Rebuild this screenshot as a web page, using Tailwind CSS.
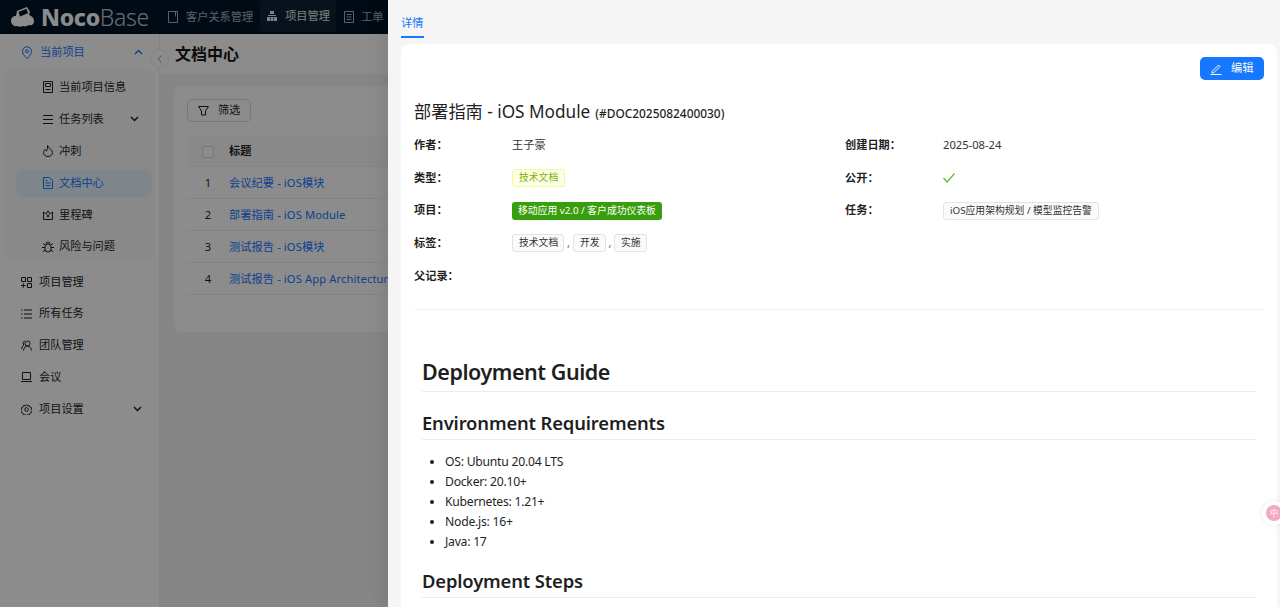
<!DOCTYPE html>
<html lang="zh">
<head>
<meta charset="utf-8">
<script src="https://cdn.jsdelivr.net/npm/@tailwindcss/browser@4"></script>
<title>NocoBase</title>
</head>
<body class="overflow-hidden">
<div class="relative w-[1280px] h-[607px] overflow-hidden bg-[#f5f5f5] text-[11.2px] text-[#1f1f1f] [font-family:'Noto_Sans','Noto_Sans_CJK_SC',sans-serif]">
  <!-- base page -->
  <div class="flex flex-col h-full">
    <header class="h-[34px] bg-[#001529] flex items-center text-white/65 shrink-0">
      <div class="w-[160px] flex items-center pl-[11px] gap-[7px] shrink-0">
        <svg class="w-[23px] h-[20px]" viewBox="0 0 23 20"><path d="M0 14c0-3 2-5 5-5l1-5 10-4 3 5-1 3c3 1 5 3 5 6 0 3-2 5-5 4-2 1-4 2-6 1-2 1-4 1-6 0-3 1-6-2-6-5z" fill="#fff"/><path d="M7.500 5l8-3.200 1.500 4.500-8 3.200z" fill="#001529"/></svg>
        <span class="text-[23px] leading-none text-white tracking-[-.3px] whitespace-nowrap"><b class="font-extrabold">Noco</b><span class="font-light opacity-75">Base</span></span>
      </div>
      <nav class="flex items-center h-full">
        <div class="flex items-center h-full pl-[8px] pr-[7px] gap-[8px]">
          <svg class="w-[10px] h-[12px]" viewBox="0 0 10 12" fill="none" stroke="currentColor"><path d="M.5.5h9v11h-9zM7.500 .5v5"/></svg>
          <span>客户关系管理</span>
        </div>
        <div class="flex items-center h-[32px] self-start w-[76px] pl-[7px] gap-[8px] rounded-[4px] bg-white/5 text-white/90">
          <svg class="w-[10px] h-[10px]" viewBox="0 0 10 10" fill="currentColor"><path d="M3 0h4v3H3zM0 6h3v4H0zM3.500 6h3v4h-3zM7 6h3v4H7zM1 4h8v1H1z"/></svg>
          <span>项目管理</span>
        </div>
        <div class="flex items-center h-full pl-[8px] gap-[7px]">
          <svg class="w-[10px] h-[12px]" viewBox="0 0 10 12" fill="none" stroke="currentColor"><path d="M.5.5h9v11h-9zM2.500 3.500h5M2.500 6h5M2.500 8.500h5"/></svg>
          <span>工单</span>
        </div>
      </nav>
    </header>
    <div class="flex flex-1 min-h-0">
      <aside class="relative w-[160px] shrink-0 bg-white border-r border-[#f0f0f0] pt-[2px] text-[#1f1f1f]">
        <div class="h-[32px] flex items-center pl-[21px] pr-[16px] gap-[7px] text-[#1677ff]">
          <svg class="w-[12px] h-[13px]" viewBox="0 0 12 13" fill="none" stroke="currentColor"><path d="M6 12.500C3.500 10 1.500 8 1.500 5.300a4.500 4.500 0 0 1 9 0C10.500 8 8.500 10 6 12.500z"/><circle cx="6" cy="5.300" r="1.500"/></svg>
          <span class="flex-1">当前项目</span>
          <svg class="w-[9px] h-[6px]" viewBox="0 0 9 6" fill="none" stroke="currentColor" stroke-width="1.500"><path d="M1 5l3.500-3.500L8 5"/></svg>
        </div>
        <div class="h-[192px] bg-black/[.02] rounded-[8px] mx-[4px] mt-[2px] pt-[1px] pl-[12px] pr-[3px]">
          <div class="h-[32px] flex items-center pl-[27px] gap-[6px]">
            <svg class="w-[10px] h-[12px]" viewBox="0 0 10 12" fill="none" stroke="currentColor"><path d="M.5.5h9v11h-9zM2.500 2.500h5v3h-5zM2.500 8.500h5"/></svg><span>当前项目信息</span>
          </div>
          <div class="h-[32px] flex items-center pl-[27px] pr-[13px] gap-[6px]">
            <svg class="w-[10px] h-[9px]" viewBox="0 0 10 9" fill="none" stroke="currentColor"><path d="M0 .5h10M0 4.500h10M0 8.500h10"/></svg><span class="flex-1">任务列表</span>
            <svg class="w-[9px] h-[6px]" viewBox="0 0 9 6" fill="none" stroke="currentColor" stroke-width="1.500"><path d="M1 1l3.500 3.500L8 1"/></svg>
          </div>
          <div class="h-[32px] flex items-center pl-[27px] gap-[6px]">
            <svg class="w-[10px] h-[12px]" viewBox="0 0 10 12" fill="none" stroke="currentColor"><path d="M4.500 .5C5 3 9.500 4.500 9.500 7.500a4.500 4 0 0 1-9 0C.5 6 1.500 5 2.200 4.500 2.500 5.500 3 6 3.500 6 4.500 4.500 4.800 2.500 4.500 .5z"/></svg><span>冲刺</span>
          </div>
          <div class="h-[28px] my-[2px] flex items-center pl-[27px] gap-[6px] rounded-[8px] bg-[#e6f4ff] text-[#1677ff]">
            <svg class="w-[10px] h-[12px]" viewBox="0 0 10 12" fill="none" stroke="currentColor"><path d="M.5.5h6l3 3v8h-9zM2.500 6h5M2.500 8.500h5M2.500 3.500h2"/></svg><span>文档中心</span>
          </div>
          <div class="h-[32px] flex items-center pl-[27px] gap-[6px]">
            <svg class="w-[10px] h-[10px]" viewBox="0 0 10 10" fill="none" stroke="currentColor"><path d="M.5 9.500h9V2L7 4 5 .8 3 4 .5 2z"/><circle cx="5" cy="6" r="1"/></svg><span>里程碑</span>
          </div>
          <div class="h-[31px] flex items-center pl-[26px] gap-[5px]">
            <svg class="w-[12px] h-[12px]" viewBox="0 0 12 12" fill="none" stroke="currentColor"><rect x="3" y="3" width="6" height="8" rx="3"/><path d="M4 3a2 2 0 0 1 4 0M0 6.500h3M9 6.500h3M1 2.500l2 1.500M11 2.500L9 4M1 11l2-2M11 11L9 9"/></svg><span>风险与问题</span>
          </div>
        </div>
        <div class="h-[32px] mt-[4px] flex items-center pl-[21px] gap-[7px]">
          <svg class="w-[11px] h-[11px]" viewBox="0 0 11 11" fill="none" stroke="currentColor"><path d="M.5.5h4v4h-4zM6.500.5h4v4h-4zM6.500 6.500h4v4h-4zM0 8.500h4.500M2.300 6.300v4.500"/></svg><span>项目管理</span>
        </div>
        <div class="h-[31px] flex items-center pl-[21px] gap-[7px]">
          <svg class="w-[11px] h-[10px]" viewBox="0 0 11 10" fill="none" stroke="currentColor"><path d="M3 1h8M3 5h8M3 9h8M0 1h1.500M0 5h1.500M0 9h1.500"/></svg><span>所有任务</span>
        </div>
        <div class="h-[32px] flex items-center pl-[21px] gap-[7px]">
          <svg class="w-[11px] h-[11px]" viewBox="0 0 11 11" fill="none" stroke="currentColor"><circle cx="6.500" cy="3.500" r="2.500"/><path d="M2.500 10.500c.5-3 2-4.500 4-4.500s3.500 1.500 4 4.500M3.800 1C1.800 1.500 1.500 4 3 5 1.500 6 .8 7.500.5 9"/></svg><span>团队管理</span>
        </div>
        <div class="h-[32px] flex items-center pl-[21px] gap-[7px]">
          <svg class="w-[11px] h-[10px]" viewBox="0 0 11 10" fill="none" stroke="currentColor"><path d="M1.500.5h8v7h-8zM0 9.500h11"/></svg><span>会议</span>
        </div>
        <div class="h-[32px] flex items-center pl-[21px] pr-[17px] gap-[7px]">
          <svg class="w-[11px] h-[11px]" viewBox="0 0 11 11" fill="none" stroke="currentColor"><path d="M5.500.5l1 1.300 1.700-.3.700 1.500 1.600.7-.3 1.800.800 1-.800 1 .1 1.200-1.600.8-.7 1.500-1.700-.3-.8 1-1.200-1-1.600.3-.7-1.500-1.500-.8.2-1.200-.9-1 .9-1-.2-1.800 1.500-.7.7-1.500 1.700.3z"/><circle cx="5.500" cy="5.500" r="1.800"/></svg><span class="flex-1">项目设置</span>
          <svg class="w-[9px] h-[6px]" viewBox="0 0 9 6" fill="none" stroke="currentColor" stroke-width="1.500"><path d="M1 1l3.500 3.500L8 1"/></svg>
        </div>
        <div class="absolute right-[-10px] top-[15px] w-[19px] h-[19px] rounded-full bg-white border border-[#f0f0f0] flex items-center justify-center">
          <svg class="w-[5px] h-[8px]" viewBox="0 0 5 8" fill="none" stroke="#999"><path d="M4.500.5L1 4l3.500 3.500"/></svg>
        </div>
      </aside>
      <main class="flex-1 min-w-0">
        <div class="h-[40px] bg-white flex items-center pl-[15px] text-[16px] font-semibold text-[#141414]">文档中心</div>
        <div class="mt-[12px] ml-[14px] mr-[14px] h-[246px] bg-white rounded-[8px] pt-[13px] px-[13px] overflow-hidden">
          <div class="w-[64px] h-[23px] rounded-[5px] border border-[#d9d9d9] flex items-center pl-[10px] gap-[9px] text-[#1f1f1f]">
            <svg class="w-[11px] h-[10px]" viewBox="0 0 11 10" fill="none" stroke="currentColor"><path d="M.5.5h10L7.500 5v4h-4V5z"/></svg><span>筛选</span>
          </div>
          <div class="mt-[13px] w-[1100px]">
            <div class="h-[32px] pt-[2px] bg-[#fafafa] flex items-center font-semibold border-b border-[#f0f0f0] rounded-t-[6px]">
              <div class="w-[42px] flex justify-center"><span class="block w-[12px] h-[12px] rounded-[3px] border border-[#d9d9d9] bg-white"></span></div><span>标题</span>
            </div>
            <div class="h-[32px] pt-[2px] flex items-center border-b border-[#f0f0f0] tracking-[.1px]"><div class="w-[42px] text-center">1</div><a class="text-[#1677ff]">会议纪要 - iOS模块</a></div>
            <div class="h-[32px] pt-[2px] flex items-center border-b border-[#f0f0f0] tracking-[.1px]"><div class="w-[42px] text-center">2</div><a class="text-[#1677ff]">部署指南 - iOS Module</a></div>
            <div class="h-[32px] pt-[2px] flex items-center border-b border-[#f0f0f0] tracking-[.1px]"><div class="w-[42px] text-center">3</div><a class="text-[#1677ff]">测试报告 - iOS模块</a></div>
            <div class="h-[32px] pt-[2px] flex items-center border-b border-[#f0f0f0] tracking-[.1px]"><div class="w-[42px] text-center">4</div><a class="text-[#1677ff]">测试报告 - iOS App Architecture</a></div>
          </div>
        </div>
      </main>
    </div>
  </div>
  <!-- mask -->
  <div class="absolute inset-0 z-20 bg-black/45"></div>
  <!-- drawer -->
  <div class="absolute z-30 top-0 right-0 bottom-0 w-[892px] bg-[#f5f5f5] shadow-[-6px_0_16px_rgba(0,0,0,.08)] pl-[13px] pr-[3px] overflow-hidden">
    <div class="h-[38px] flex items-end">
      <div class="h-[38px] w-[23px] border-b-2 border-[#1677ff] text-[#1677ff] pt-[14px] leading-[17px] text-[11.2px] whitespace-nowrap">详情</div>
    </div>
    <div class="mt-[6px] bg-white rounded-[8px] h-[700px] px-[13px] pt-[13px]">
      <div class="flex justify-end">
        <div class="w-[64px] h-[23px] rounded-[5px] bg-[#1677ff] text-white flex items-center pl-[10px] gap-[9px]">
          <svg class="w-[12px] h-[12px]" viewBox="0 0 12 12" fill="none" stroke="currentColor"><path d="M2 8.500L8.500 2 10 3.500 3.500 10H2zM0.500 11.500h11"/></svg><span>编辑</span>
        </div>
      </div>
      <h2 class="mt-[20px] h-[24px] flex items-baseline text-[17.200px] leading-[24px] font-normal text-[#1f1f1f] whitespace-nowrap">部署指南 - iOS Module<span class="ml-[5px] text-[11.900px] font-medium">(#DOC2025082400030)</span></h2>
      <div class="mt-[5px] grid grid-cols-[431px_1fr] auto-rows-[32.700px] w-[850px]">
        <div class="flex items-center"><b class="w-[98px] font-semibold">作者：</b><span class="text-[#333]">王子豪</span></div>
        <div class="flex items-center"><b class="w-[98px] font-semibold">创建日期：</b><span class="text-[#333]">2025-08-24</span></div>
        <div class="flex items-center"><b class="w-[98px] font-semibold">类型：</b><span class="h-[18px] px-[6px] rounded-[3px] border border-[#eaff8f] bg-[#fcffe6] text-[#7cb305] text-[9.800px] leading-[16px]">技术文档</span></div>
        <div class="flex items-center"><b class="w-[98px] font-semibold">公开：</b><svg class="w-[12px] h-[10px]" viewBox="0 0 12 10" fill="none" stroke="#52c41a" stroke-width="1.200"><path d="M.5 5l3.500 4L11.500.5"/></svg></div>
        <div class="flex items-center"><b class="w-[98px] font-semibold">项目：</b><span class="h-[18px] px-[6px] rounded-[3px] bg-[#389e0d] text-white text-[9.800px] leading-[18px]">移动应用 v2.0 / 客户成功仪表板</span></div>
        <div class="flex items-center"><b class="w-[98px] font-semibold">任务：</b><span class="h-[18px] px-[6px] rounded-[3px] border border-[#e3e3e3] bg-[#fafafa] text-[#333] text-[9.800px] leading-[16px]">iOS应用架构规划 / 模型监控告警</span></div>
        <div class="flex items-center"><b class="w-[98px] font-semibold">标签：</b>
          <span class="h-[18px] px-[6px] rounded-[3px] border border-[#e3e3e3] bg-[#fafafa] text-[#333] text-[9.800px] leading-[16px] w-[52px] whitespace-nowrap">技术文档</span><span class="w-[9px] text-center text-[#666]">,</span>
          <span class="h-[18px] px-[6px] rounded-[3px] border border-[#e3e3e3] bg-[#fafafa] text-[#333] text-[9.800px] leading-[16px] w-[33px] whitespace-nowrap">开发</span><span class="w-[8px] text-center text-[#666]">,</span>
          <span class="h-[18px] px-[6px] rounded-[3px] border border-[#e3e3e3] bg-[#fafafa] text-[#333] text-[9.800px] leading-[16px] w-[33px] whitespace-nowrap">实施</span>
        </div>
        <div></div>
        <div class="flex items-center"><b class="w-[98px] font-semibold">父记录：</b></div>
      </div>
      <div class="mt-[17px] border-t border-[#f0f0f0] w-[850px]"></div>
      <article class="mt-[44px] pl-[8px] w-[842px] text-[#1f1f1f]">
        <h1 class="text-[21.500px] leading-[36px] font-semibold tracking-[-.45px] border-b border-[#ececec] h-[38px]">Deployment Guide</h1>
        <h2 class="mt-[15px] text-[18.400px] leading-[32px] font-semibold tracking-[-.15px] border-b border-[#ececec] h-[33px]">Environment Requirements</h2>
        <ul class="mt-[12px] ml-[23px] list-disc text-[12.200px] tracking-[-.25px] leading-[20px] text-[#1f1f1f]">
          <li>OS: Ubuntu 20.04 LTS</li>
          <li>Docker: 20.10+</li>
          <li>Kubernetes: 1.21+</li>
          <li>Node.js: 16+</li>
          <li>Java: 17</li>
        </ul>
        <h2 class="mt-[13px] text-[18.400px] leading-[32px] font-semibold tracking-[-.15px] border-b border-[#ececec] h-[33px]">Deployment Steps</h2>
      </article>
    </div>
  </div>
  <!-- floating widget -->
  <div class="absolute z-40 left-[1262px] top-[501px] w-[24px] h-[24px] rounded-full bg-white shadow-[0_0_4px_rgba(0,0,0,.1)] flex items-center">
    <div class="ml-[4px] w-[16px] h-[16px] rounded-full bg-[#f4a9bf] text-white text-[8px] leading-[16px] text-center">中</div>
  </div>
</div>
</body>
</html>
